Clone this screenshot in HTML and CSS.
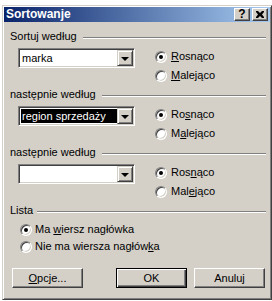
FILE: index.html
```html
<!DOCTYPE html>
<html lang="pl">

<head>
    <meta charset="UTF-8">
    <meta name="viewport" content="width=device-width, initial-scale=1.0">
    <title>Sortowanje</title>
    <link rel="stylesheet" href="styles.css">
</head>

<body>
    <div class="window">
        <div class="titlebar">
            <span class="title">Sortowanje</span>
            <div class="caption-buttons">
                <span class="cap-btn help">?</span>
                <span class="cap-btn">
                    <svg width="8" height="7" viewBox="0 0 8 7">
                        <path d="M0 0h2l2 2 2-2h2v1l-2 2.5 2 2.5v1h-2l-2-2-2 2h-2v-1l2-2.5-2-2.5z" fill="#000" />
                    </svg>
                </span>
            </div>
        </div>

        <div class="client">
            <!-- Sortuj według -->
            <div class="group">
                <div class="legend"><span>Sortuj według</span><span class="rule"></span></div>
                <div class="group-body">
                    <div class="combo">
                        <span class="combo-text">marka</span>
                        <span class="combo-btn"><span class="arrow"></span></span>
                    </div>
                    <div class="radios">
                        <div class="radio-row"><span class="radio checked"></span><span><u>R</u>osnąco</span></div>
                        <div class="radio-row"><span class="radio"></span><span><u>M</u>alejąco</span></div>
                    </div>
                </div>
            </div>

            <!-- następnie według -->
            <div class="group">
                <div class="legend"><span>następnie według</span><span class="rule"></span></div>
                <div class="group-body">
                    <div class="combo">
                        <span class="combo-text selected">region sprzedaży</span>
                        <span class="combo-btn"><span class="arrow"></span></span>
                    </div>
                    <div class="radios">
                        <div class="radio-row"><span class="radio checked"></span><span>Ro<u>s</u>nąco</span></div>
                        <div class="radio-row"><span class="radio"></span><span>M<u>a</u>lejąco</span></div>
                    </div>
                </div>
            </div>

            <!-- następnie według -->
            <div class="group">
                <div class="legend"><span>następnie według</span><span class="rule"></span></div>
                <div class="group-body">
                    <div class="combo">
                        <span class="combo-text"></span>
                        <span class="combo-btn"><span class="arrow"></span></span>
                    </div>
                    <div class="radios">
                        <div class="radio-row"><span class="radio checked"></span><span>Ros<u>n</u>ąco</span></div>
                        <div class="radio-row"><span class="radio"></span><span>Mal<u>e</u>jąco</span></div>
                    </div>
                </div>
            </div>

            <!-- Lista -->
            <div class="group list-group">
                <div class="legend short"><span>Lista</span><span class="rule"></span></div>
                <div class="list-body">
                    <div class="radio-row"><span class="radio checked"></span><span>Ma <u>w</u>iersz nagłówka</span></div>
                    <div class="radio-row"><span class="radio"></span><span>Nie ma wiersza nagłów<u>k</u>a</span></div>
                </div>
            </div>

            <div class="buttons">
                <button class="btn"><u>O</u>pcje...</button>
                <button class="btn default ok">OK</button>
                <button class="btn">Anuluj</button>
            </div>
        </div>
    </div>
</body>

</html>
```

FILE: styles.css
```css
* {
    margin: 0;
    padding: 0;
    box-sizing: border-box;
}

body {
    background-color: #fff;
    font-family: "Liberation Sans", Arial, sans-serif;
    font-size: 11px;
    line-height: 13px;
    color: #000;
}

.window {
    width: 270px;
    height: 295px;
    margin: 5px 0 0 2px;
    padding: 1px;
    background-color: #d4d0c8;
    border: 1px solid;
    border-color: #d4d0c8 #404040 #404040 #d4d0c8;
    box-shadow: inset 1px 1px #fff, inset -1px -1px #808080;
}

/* title bar */
.titlebar {
    height: 15px;
    display: flex;
    align-items: center;
    background: linear-gradient(to right, #0a246a, #a6caf0);
    padding-left: 2px;
}

.title {
    flex: 1;
    color: #fff;
    font-weight: bold;
    font-size: 12px;
    line-height: 15px;
}

.caption-buttons {
    display: flex;
    gap: 2px;
    margin-right: 2px;
}

.cap-btn {
    width: 16px;
    height: 13px;
    display: flex;
    align-items: center;
    justify-content: center;
    background-color: #d4d0c8;
    border: 1px solid;
    border-color: #fff #404040 #404040 #fff;
    box-shadow: inset -1px -1px #808080;
    font-weight: bold;
    font-size: 12px;
    line-height: 11px;
}

/* dialog body */
.client {
    padding: 8px 4px 0 6px;
}

.group {
    margin-bottom: 3px;
}

.legend {
    display: flex;
    height: 13px;
}

.rule {
    flex: 1;
    height: 2px;
    margin: 7px 0 0 6px;
    border-top: 1px solid #808080;
    border-bottom: 1px solid #fff;
}

.legend.short .rule {
    margin-left: 4px;
}

.group-body {
    display: flex;
    margin-top: 4px;
}

.combo {
    width: 117px;
    height: 20px;
    margin: 1px 0 0 8px;
    display: flex;
    padding: 1px;
    background-color: #fff;
    border: 1px solid;
    border-color: #808080 #fff #fff #808080;
    box-shadow: inset 1px 1px #404040, inset -1px -1px #d4d0c8;
}

.combo-text {
    flex: 1;
    margin: 1px 0 0 1px;
    padding-left: 1px;
    height: 14px;
    line-height: 14px;
    white-space: nowrap;
    overflow: hidden;
}

.combo-text.selected {
    background-color: #000;
    color: #fff;
}

.combo-btn {
    width: 16px;
    height: 16px;
    display: flex;
    align-items: center;
    justify-content: center;
    background-color: #d4d0c8;
    border: 1px solid;
    border-color: #d4d0c8 #404040 #404040 #d4d0c8;
    box-shadow: inset 1px 1px #fff, inset -1px -1px #808080;
}

.arrow {
    width: 0;
    height: 0;
    border-left: 4px solid transparent;
    border-right: 4px solid transparent;
    border-top: 4px solid #000;
    margin-top: 1px;
}

.radios {
    margin-left: 20px;
}

.radio-row {
    display: flex;
    align-items: center;
    gap: 4px;
    height: 19px;
}

.radio {
    position: relative;
    width: 12px;
    height: 12px;
    border-radius: 50%;
    background-color: #fff;
    border: 1px solid;
    border-color: #808080 #fff #fff #808080;
    box-shadow: inset 1px 1px #404040, inset -1px -1px #d4d0c8;
}

.radio.checked::after {
    content: "";
    position: absolute;
    left: 3px;
    top: 3px;
    width: 4px;
    height: 4px;
    border-radius: 50%;
    background-color: #000;
}

.list-group {
    margin-bottom: 0;
}

.list-body {
    margin: 4px 0 0 10px;
}

.list-body .radio-row {
    height: 17px;
    gap: 3px;
}

/* buttons */
.buttons {
    display: flex;
    margin: 13px 0 0 2px;
}

.btn {
    width: 71px;
    height: 20px;
    font-family: "Liberation Sans", Arial, sans-serif;
    font-size: 11px;
    color: #000;
    background-color: #d4d0c8;
    border: 1px solid;
    border-color: #fff #404040 #404040 #fff;
    box-shadow: inset -1px -1px #808080;
}

.btn.default {
    border: 1px solid #000;
    box-shadow: inset 1px 1px #fff, inset -1px -1px #404040, inset -2px -2px #808080;
}

.btn.ok {
    margin-left: 33px;
    margin-right: 7px;
}
```
